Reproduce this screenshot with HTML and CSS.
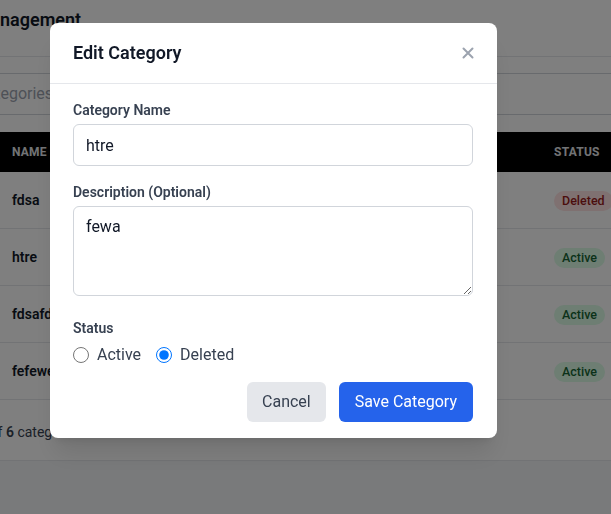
FILE: index.html
```html
<!DOCTYPE html>
<html lang="en">
<head>
<meta charset="utf-8">
<title>Category Management</title>
<link rel="stylesheet" href="styles.css">
</head>
<body>
<div class="page">
  <header class="page-head">
    <h1 class="page-title">Category Management</h1>
  </header>
  <div class="search-bar">
    <div class="search-input">Search categories...</div>
  </div>
  <div class="table">
    <div class="row thead">
      <div class="cell th">Name</div>
      <div class="cell th">Description</div>
      <div class="cell th">Status</div>
      <div class="cell th">Actions</div>
    </div>
    <div class="row">
      <div class="cell name">fdsa</div>
      <div class="cell desc">fdsa</div>
      <div class="cell"><span class="badge badge-deleted">Deleted</span></div>
      <div class="cell"></div>
    </div>
    <div class="row">
      <div class="cell name">htre</div>
      <div class="cell desc">fewa</div>
      <div class="cell"><span class="badge badge-active">Active</span></div>
      <div class="cell"></div>
    </div>
    <div class="row">
      <div class="cell name">fdsafdsa</div>
      <div class="cell desc">fdsa</div>
      <div class="cell"><span class="badge badge-active">Active</span></div>
      <div class="cell"></div>
    </div>
    <div class="row">
      <div class="cell name">fefewefe</div>
      <div class="cell desc">fefe</div>
      <div class="cell"><span class="badge badge-active">Active</span></div>
      <div class="cell"></div>
    </div>
  </div>
  <div class="table-foot"><span class="foot-text">Showing 1 to 4 of <b>6</b> categories</span></div>
</div>

<div class="overlay">
  <div class="modal">
    <div class="modal-head">
      <h2 class="modal-title">Edit Category</h2>
      <button class="close-btn" type="button" aria-label="Close">
        <svg width="12" height="12" viewBox="0 0 12 12" aria-hidden="true"><path d="M1.5 1.5 L10.5 10.5 M10.5 1.5 L1.5 10.5" stroke="#9ca3af" stroke-width="2" stroke-linecap="round" fill="none"/></svg>
      </button>
    </div>
    <form class="modal-body">
      <div class="field">
        <label class="label" for="cname">Category Name</label>
        <input class="input" id="cname" type="text" value="htre">
      </div>
      <div class="field">
        <label class="label" for="cdesc">Description (Optional)</label>
        <textarea class="input textarea" id="cdesc" rows="3">fewa</textarea>
      </div>
      <div class="field field-status">
        <span class="label">Status</span>
        <div class="radios">
          <label class="radio"><input type="radio" name="status"><span>Active</span></label>
          <label class="radio"><input type="radio" name="status" checked><span>Deleted</span></label>
        </div>
      </div>
      <div class="actions">
        <button type="button" class="btn btn-cancel">Cancel</button>
        <button type="button" class="btn btn-save">Save Category</button>
      </div>
    </form>
  </div>
</div>
</body>
</html>
```

FILE: styles.css
```css
* { box-sizing: border-box; }

html, body {
  margin: 0;
  height: 514px;
  overflow: hidden;
}

body {
  font-family: Roboto, "Liberation Sans", sans-serif;
  background: #f3f4f6;
  color: #111827;
}

/* ---------- background page ---------- */
.page {
  background: #ffffff;
  border-bottom: 1px solid #e5e7eb;
  overflow: hidden;
}

.page-head {
  height: 57px;
  padding-top: 6px;
  border-bottom: 1px solid #e5e7eb;
  white-space: nowrap;
  overflow: hidden;
}

.page-title {
  margin: 0 0 0 -103px;
  font-size: 18px;
  line-height: 28px;
  font-weight: 600;
  color: #111827;
}

.search-bar {
  padding: 16px 0 17px;
  overflow: hidden;
}

.search-input {
  margin-left: -88px;
  width: 900px;
  height: 42px;
  border: 1px solid #d1d5db;
  border-radius: 6px;
  padding: 8px 12px;
  font-size: 16px;
  line-height: 24px;
  color: #9ca3af;
  white-space: nowrap;
}

.table {
  width: 900px;
}

.row {
  display: grid;
  grid-template-columns: 230px 312px 200px 158px;
  border-bottom: 1px solid #e5e7eb;
}

.thead {
  background: #000000;
  border-bottom: none;
}

.cell {
  padding: 16px 12px;
  font-size: 14px;
  line-height: 24px;
  white-space: nowrap;
}

.th {
  padding: 12px;
  font-size: 12px;
  line-height: 16px;
  font-weight: 700;
  letter-spacing: 0.02em;
  text-transform: uppercase;
  color: #e5e7eb;
}

.name {
  font-weight: 600;
  color: #111827;
}

.desc {
  color: #6b7280;
}

.badge {
  display: inline-block;
  padding: 2px 8px;
  border-radius: 9999px;
  font-size: 12.5px;
  line-height: 16px;
  font-weight: 500;
}

.badge-deleted {
  background: #fee2e2;
  color: #991b1b;
}

.badge-active {
  background: #dcfce7;
  color: #166534;
}

.table-foot {
  height: 60px;
  padding: 22px 0 18px;
  font-size: 14px;
  line-height: 20px;
  color: #374151;
  white-space: nowrap;
  overflow: hidden;
}

.foot-text {
  display: inline-block;
  margin-left: -106px;
}

.foot-text b {
  font-weight: 600;
}

/* ---------- modal ---------- */
.overlay {
  position: fixed;
  inset: 0;
  background: rgba(0, 0, 0, 0.5);
}

.modal {
  margin: 23px 0 0 50px;
  width: 447px;
  background: #ffffff;
  border-radius: 8px;
  box-shadow: 0 20px 25px -5px rgba(0, 0, 0, 0.1), 0 8px 10px -6px rgba(0, 0, 0, 0.1);
}

.modal-head {
  display: flex;
  align-items: center;
  justify-content: space-between;
  padding: 16px 23px;
  border-bottom: 1px solid #e5e7eb;
}

.modal-title {
  margin: 0;
  font-size: 18px;
  line-height: 28px;
  font-weight: 600;
  color: #111827;
}

.close-btn {
  display: flex;
  align-items: center;
  justify-content: center;
  width: 16px;
  height: 16px;
  padding: 0;
  margin-right: -2px;
  border: none;
  background: none;
}

.modal-body {
  display: flex;
  flex-direction: column;
  padding: 16px 24px 16px 23px;
}

.field {
  display: flex;
  flex-direction: column;
  margin-bottom: 16px;
}

.field-status {
  margin-top: 6px;
  margin-bottom: 15px;
}

.label {
  margin-bottom: 4px;
  font-size: 14px;
  line-height: 20px;
  font-weight: 600;
  color: #374151;
}

.input {
  display: block;
  width: 100%;
  height: 42px;
  padding: 8px 12px;
  border: 1px solid #d1d5db;
  border-radius: 6px;
  font-family: Roboto, "Liberation Sans", sans-serif;
  font-size: 16px;
  line-height: 24px;
  color: #111827;
  background: #ffffff;
}

.textarea {
  height: 90px;
  resize: vertical;
}

.radios {
  display: flex;
  gap: 15px;
  margin-top: 1px;
}

.radio {
  display: flex;
  align-items: center;
  gap: 8px;
  font-size: 16px;
  line-height: 24px;
  color: #374151;
}

.radio input {
  width: 16px;
  height: 16px;
  margin: 0;
}

.actions {
  display: flex;
  justify-content: flex-end;
  gap: 13px;
}

.btn {
  height: 40px;
  padding: 8px 16px;
  border: none;
  border-radius: 6px;
  font-family: Roboto, "Liberation Sans", sans-serif;
  font-size: 16px;
  line-height: 24px;
}

.btn-cancel {
  padding: 8px 15px;
  background: #e5e7eb;
  color: #374151;
}

.btn-save {
  background: #2563eb;
  color: #ffffff;
}
```
